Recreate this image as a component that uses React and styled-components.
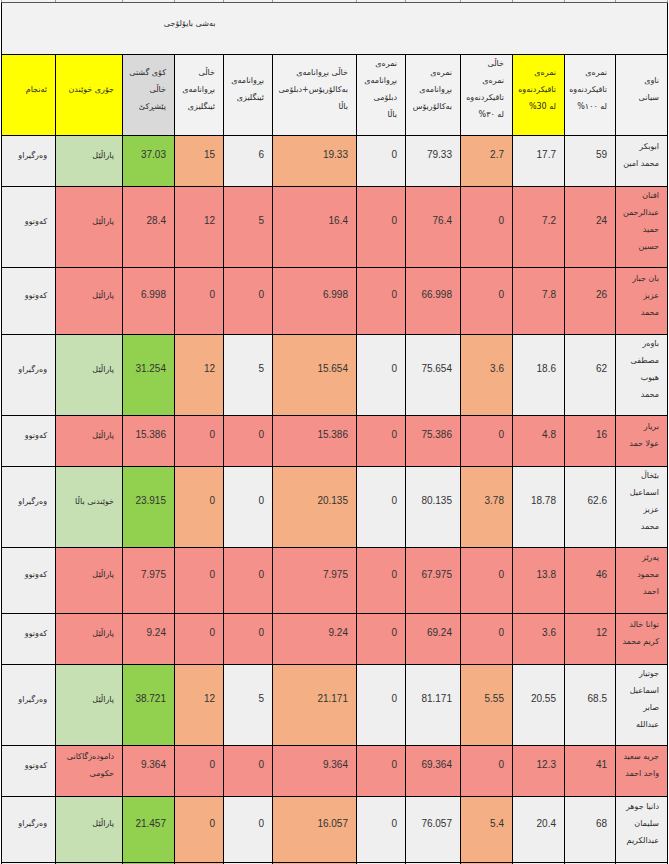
import React from "react";
import styled, { createGlobalStyle } from "styled-components";

const GlobalStyle = createGlobalStyle`
  html, body { margin: 0; padding: 0; background: #ffffff; }
  #root { padding-left: 1px; }
`;

const C = {
  gray: "#efefef",
  head: "#f2f2f2",
  red: "#f4918a",
  orange: "#f4b084",
  lgreen: "#c6e0b4",
  green: "#92d050",
  yellow: "#ffff00",
  dgray: "#d9d9d9",
};

const COLS = [52, 51, 52, 52, 55, 49, 84, 49, 49, 52, 67, 54];

const Sheet = styled.table`
  direction: rtl;
  border-collapse: collapse;
  table-layout: fixed;
  width: 666px;
  font-family: "Liberation Sans", "DejaVu Sans", sans-serif;
  font-size: 10px;
  color: #333333;
`;

const Col = styled.col`
  width: ${(p) => p.$w}px;
`;

const Row = styled.tr`
  height: ${(p) => p.$h}px;
`;

const Cell = styled.td`
  background: ${(p) => p.$bg || C.gray};
  border: 1px solid #000;
  padding: 0 8px 12px 6px;
  text-align: right;
  vertical-align: middle;
  line-height: 16px;
  white-space: nowrap;
  overflow: hidden;
`;

const Ar = styled.span`
  font-family: "DejaVu Sans", sans-serif;
  font-size: 8px;
  color: #2b2b2b;
`;

const StubCell = styled.td`
  height: 2px;
  padding: 0;
  font-size: 0;
  line-height: 0;
  background: ${C.head};
  border-top: none;
  border-left: 1px solid #9a9a9a;
  border-right: 1px solid #9a9a9a;
  border-bottom: 1px solid #555;
`;

const TitleCell = styled.td`
  background: ${C.head};
  border-top: 1px solid #555;
  border-bottom: 1px solid #000;
  border-left: ${(p) => (p.$edge === "left" ? "1px solid #000" : "none")};
  border-right: ${(p) => (p.$edge === "right" ? "1px solid #000" : "none")};
  padding: 0 8px 12px 6px;
  text-align: right;
  vertical-align: middle;
  white-space: nowrap;
`;

const Lines = ({ lines }) => (
  <Ar>
    {lines.map((l, i) => (
      <React.Fragment key={i}>
        {i > 0 && <br />}
        {l}
      </React.Fragment>
    ))}
  </Ar>
);

const HEAD = [
  { lines: ["ناوی", "سیانی"] },
  { lines: ["نمرەی", "تاقیکردنەوە", "لە ١٠٠%"] },
  { lines: ["نمرەی", "تاقیکردنەوە", "لە 30%"], bg: C.yellow },
  { lines: ["خاڵی", "نمرەی", "تاقیکردنەوە", "لە ٣٠%"] },
  { lines: ["نمرەی", "بڕوانامەی", "بەکالۆریۆس"] },
  { lines: ["نمرەی", "بڕوانامەی", "دبلۆمی", "باڵا"] },
  { lines: ["خاڵی بڕوانامەی", "بەکالۆریۆس+دبلۆمی", "باڵا"] },
  { lines: ["بڕوانامەی", "ئینگلیزی"] },
  { lines: ["خاڵی", "بڕوانامەی", "ئینگلیزی"] },
  { lines: ["کۆی گشتی", "خاڵی", "پێشڕکێ"], bg: C.dgray },
  { lines: ["جۆری خوێندن"], bg: C.yellow },
  { lines: ["ئەنجام"], bg: C.yellow },
];

const PASS_BG = [C.gray, C.gray, C.gray, C.orange, C.gray, C.gray, C.orange, C.gray, C.orange, C.green, C.lgreen, C.gray];
const FAIL_BG = [C.red, C.red, C.red, C.red, C.red, C.red, C.red, C.red, C.red, C.red, C.red, C.gray];

const ROWS = [
  { h: 51, pass: true, name: ["ابوبکر", "محمد امین"], v: ["59", "17.7", "2.7", "79.33", "0", "19.33", "6", "15", "37.03"], type: ["پاراڵێل"] },
  { h: 81, pass: false, name: ["افنان", "عبدالرحمن", "حمید", "حسین"], v: ["24", "7.2", "0", "76.4", "0", "16.4", "5", "12", "28.4"], type: ["پاراڵێل"] },
  { h: 67, pass: false, name: ["بان جبار", "عزیز", "محمد"], v: ["26", "7.8", "0", "66.998", "0", "6.998", "0", "0", "6.998"], type: ["پاراڵێل"] },
  { h: 80, pass: true, name: ["باوەر", "مصطفی", "هیوب", "محمد"], v: ["62", "18.6", "3.6", "75.654", "0", "15.654", "5", "12", "31.254"], type: ["پاراڵێل"] },
  { h: 51, pass: false, name: ["بریار", "عولا حمد"], v: ["16", "4.8", "0", "75.386", "0", "15.386", "0", "0", "15.386"], type: ["پاراڵێل"] },
  { h: 81, pass: true, name: ["بێخاڵ", "اسماعیل", "عزیز", "محمد"], v: ["62.6", "18.78", "3.78", "80.135", "0", "20.135", "0", "0", "23.915"], type: ["خوێندنی باڵا"] },
  { h: 66, pass: false, name: ["پەرێز", "محمود", "احمد"], v: ["46", "13.8", "0", "67.975", "0", "7.975", "0", "0", "7.975"], type: ["پاراڵێل"] },
  { h: 51, pass: false, name: ["توانا خالد", "کریم محمد"], v: ["12", "3.6", "0", "69.24", "0", "9.24", "0", "0", "9.24"], type: ["پاراڵێل"] },
  { h: 81, pass: true, name: ["جوتیار", "اسماعیل", "صابر", "عبدالله"], v: ["68.5", "20.55", "5.55", "81.171", "0", "21.171", "5", "12", "38.721"], type: ["پاراڵێل"] },
  { h: 51, pass: false, name: ["جریە سعید", "واحد احمد"], v: ["41", "12.3", "0", "69.364", "0", "9.364", "0", "0", "9.364"], type: ["دامودەزگاکانی", "حکومی"] },
  { h: 66, pass: true, name: ["دانیا جوهر", "سلیمان", "عبدالکریم"], v: ["68", "20.4", "5.4", "76.057", "0", "16.057", "0", "0", "21.457"], type: ["پاراڵێل"] },
];

const DataRow = ({ row }) => {
  const bg = row.pass ? PASS_BG : FAIL_BG;
  return (
    <Row $h={row.h}>
      <Cell $bg={bg[0]}><Lines lines={row.name} /></Cell>
      {row.v.map((val, i) => (
        <Cell key={i} $bg={bg[i + 1]}>{val}</Cell>
      ))}
      <Cell $bg={bg[10]}><Lines lines={row.type} /></Cell>
      <Cell $bg={bg[11]}><Lines lines={[row.pass ? "وەرگیراو" : "کەوتوو"]} /></Cell>
    </Row>
  );
};

export default function App() {
  return (
    <>
      <GlobalStyle />
      <Sheet>
        <colgroup>
          {COLS.map((w, i) => (
            <Col key={i} $w={w} />
          ))}
        </colgroup>
        <tbody>
          <tr>
            {COLS.map((_, i) => (
              <StubCell key={i} />
            ))}
          </tr>
          <Row $h={52}>
            <TitleCell colSpan={8} $edge="right" />
            <TitleCell colSpan={4} $edge="left">
              <Ar>بەشی بایۆلۆجی</Ar>
            </TitleCell>
          </Row>
          <Row $h={81}>
            {HEAD.map((h, i) => (
              <Cell key={i} $bg={h.bg || C.head}>
                <Lines lines={h.lines} />
              </Cell>
            ))}
          </Row>
          {ROWS.map((r, i) => (
            <DataRow key={i} row={r} />
          ))}
          <Row $h={51}>
            {PASS_BG.map((bg, i) => (
              <Cell key={i} $bg={bg} />
            ))}
          </Row>
        </tbody>
      </Sheet>
    </>
  );
}
